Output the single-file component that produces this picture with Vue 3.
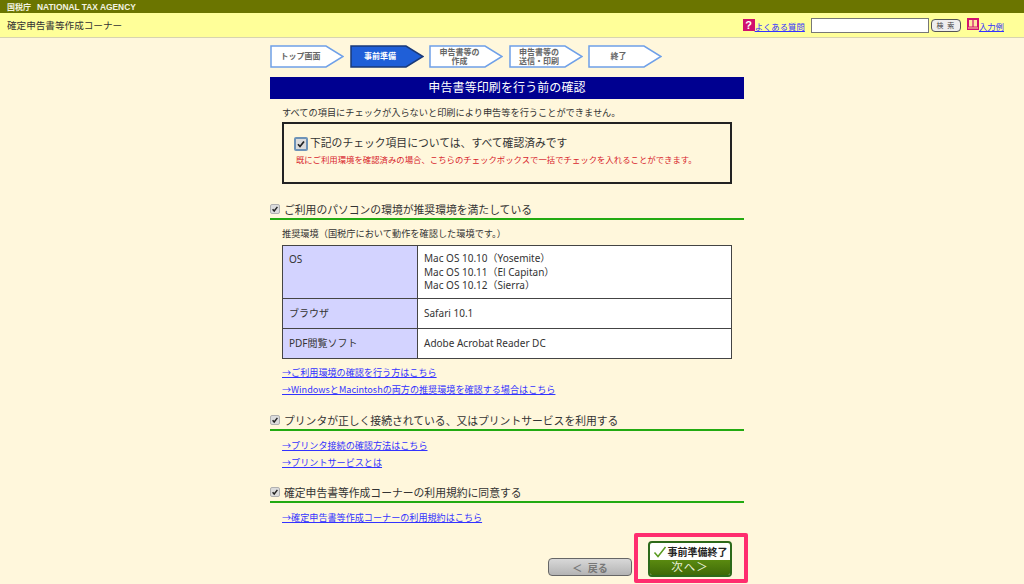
<template>
  <div class="page">
    <div class="agency">
      <span class="agency-jp">国税庁</span>
      <span class="agency-en">NATIONAL TAX AGENCY</span>
    </div>
    <header class="corner">
      <span class="corner-title">確定申告書等作成コーナー</span>
      <div class="tools">
        <span class="pink-icon">?</span>
        <a class="tool-link faq">よくある質問</a>
        <input class="search" type="text" />
        <button class="search-btn">検 索</button>
        <span class="pink-icon book">
          <svg viewBox="0 0 12 12" width="12" height="12">
            <path d="M2 2h3.4v6.5H2zM6.6 2H10v6.5H6.6z" fill="#ffe6a0" />
            <path d="M1 10h10" stroke="#ffe6a0" stroke-width="1" />
          </svg>
        </span>
        <a class="tool-link">入力例</a>
      </div>
    </header>

    <main class="content">
      <nav class="steps">
        <div v-for="step in steps" :key="step.label" class="step" :class="{ active: step.active }">
          <svg class="step-shape" viewBox="0 0 74 23" width="74" height="23">
            <polygon
              points="1,1 56,1 73,11.5 56,22 1,22"
              :fill="step.active ? '#1f5fd8' : '#fff'"
              :stroke="step.active ? '#1a3a78' : '#6fa0e8'"
              stroke-width="1.5"
            />
          </svg>
          <span class="step-label">{{ step.label }}</span>
        </div>
      </nav>

      <h1 class="page-title">申告書等印刷を行う前の確認</h1>
      <p class="intro">すべての項目にチェックが入らないと印刷により申告等を行うことができません。</p>

      <div class="check-all">
        <div class="check-all-row">
          <span class="checkbox focused">
            <svg viewBox="0 0 10 10" width="10" height="10"><path d="M2 5.2l2 2.3L8 2.4" fill="none" stroke="#222" stroke-width="1.7" /></svg>
          </span>
          <span class="check-all-label">下記のチェック項目については、すべて確認済みです</span>
        </div>
        <p class="check-all-note">既にご利用環境を確認済みの場合、こちらのチェックボックスで一括でチェックを入れることができます。</p>
      </div>

      <section class="item env">
        <h2 class="item-head">
          <span class="checkbox">
            <svg viewBox="0 0 10 10" width="8" height="8"><path d="M2 5.2l2 2.3L8 2.4" fill="none" stroke="#222" stroke-width="1.8" /></svg>
          </span>
          ご利用のパソコンの環境が推奨環境を満たしている
        </h2>
        <p class="env-note">推奨環境（国税庁において動作を確認した環境です。）</p>
        <table class="env-table">
          <tbody>
            <tr v-for="row in envRows" :key="row.name" :class="row.cls">
              <th>{{ row.name }}</th>
              <td>
                <div v-for="line in row.values" :key="line">{{ line }}</div>
              </td>
            </tr>
          </tbody>
        </table>
        <div class="links">
          <a>→ご利用環境の確認を行う方はこちら</a>
          <a>→WindowsとMacintoshの両方の推奨環境を確認する場合はこちら</a>
        </div>
      </section>

      <section class="item printer">
        <h2 class="item-head">
          <span class="checkbox">
            <svg viewBox="0 0 10 10" width="8" height="8"><path d="M2 5.2l2 2.3L8 2.4" fill="none" stroke="#222" stroke-width="1.8" /></svg>
          </span>
          プリンタが正しく接続されている、又はプリントサービスを利用する
        </h2>
        <div class="links">
          <a>→プリンタ接続の確認方法はこちら</a>
          <a>→プリントサービスとは</a>
        </div>
      </section>

      <section class="item terms">
        <h2 class="item-head">
          <span class="checkbox">
            <svg viewBox="0 0 10 10" width="8" height="8"><path d="M2 5.2l2 2.3L8 2.4" fill="none" stroke="#222" stroke-width="1.8" /></svg>
          </span>
          確定申告書等作成コーナーの利用規約に同意する
        </h2>
        <div class="links">
          <a>→確定申告書等作成コーナーの利用規約はこちら</a>
        </div>
      </section>

      <div class="actions">
        <button class="back-btn">＜&nbsp;&nbsp;戻る</button>
        <div class="highlight">
          <button class="next-btn">
            <span class="next-top">
              <svg viewBox="0 0 14 12" width="14" height="12"><path d="M1.5 6.5l3.5 4L12.5 1" fill="none" stroke="#5a9a20" stroke-width="1.5" /></svg>
              事前準備終了
            </span>
            <span class="next-bottom">次へ＞</span>
          </button>
        </div>
      </div>
    </main>
  </div>
</template>

<script setup>
const steps = [
  { label: 'トップ画面' },
  { label: '事前準備', active: true },
  { label: '申告書等の\n作成' },
  { label: '申告書等の\n送信・印刷' },
  { label: '終了' }
]

const envRows = [
  {
    name: 'OS',
    cls: 'row-os',
    values: ['Mac OS 10.10（Yosemite）', 'Mac OS 10.11（El Capitan）', 'Mac OS 10.12（Sierra）']
  },
  { name: 'ブラウザ', cls: 'row-browser', values: ['Safari 10.1'] },
  { name: 'PDF閲覧ソフト', cls: 'row-pdf', values: ['Adobe Acrobat Reader DC'] }
]
</script>

<style>
html,
body {
  margin: 0;
  background: #fff7dc;
}
</style>

<style scoped>
.page {
  width: 1024px;
  height: 584px;
  overflow: hidden;
  background: #fff7dc;
  color: #333;
  font-family: "Liberation Sans", "Noto Sans CJK JP", sans-serif;
}

.agency {
  height: 13px;
  background: #6b7500;
  color: #f4f4e0;
  display: flex;
  align-items: center;
  padding-left: 7px;
  font-size: 8px;
  font-weight: bold;
}

.agency-jp {
  margin-right: 6px;
}

.agency-en {
  font-size: 8.4px;
}

.corner {
  height: 24px;
  background: #ffff99;
  border-bottom: 1px solid #d8d4b0;
  display: flex;
  align-items: center;
  justify-content: space-between;
  padding: 0 20px 0 7px;
}

.corner-title {
  font-size: 9.6px;
  color: #333;
}

.tools {
  display: flex;
  align-items: center;
}

.pink-icon {
  width: 12px;
  height: 12px;
  background: #d0106f;
  color: #fff;
  font-size: 11px;
  font-weight: bold;
  line-height: 12px;
  text-align: center;
  display: block;
}

.book {
  margin-left: 6px;
  margin-bottom: 2px;
}

.book svg {
  display: block;
}

.tool-link {
  color: #3333ff;
  text-decoration: underline;
  font-size: 8.4px;
  margin-top: 2px;
}

.faq {
  margin-right: 6px;
}

.search {
  width: 118px;
  height: 15px;
  box-sizing: border-box;
  border: 1px solid #777;
  background: #fff;
  padding: 0;
  margin: 0;
}

.search-btn {
  width: 30px;
  height: 13px;
  margin: 0 0 0 2px;
  padding: 0;
  border: 1px solid #555;
  border-radius: 4px;
  background: #eeeeee;
  color: #444;
  font-size: 7px;
  line-height: 11px;
  font-family: inherit;
  letter-spacing: 1px;
}

.content {
  width: 474px;
  margin-left: 270px;
}

.steps {
  display: flex;
  gap: 5.5px;
  padding-top: 7px;
}

.step {
  position: relative;
  width: 74px;
  height: 23px;
}

.step-shape {
  position: absolute;
  left: 0;
  top: 0;
}

.step-label {
  position: absolute;
  left: 3px;
  top: 0;
  width: 55px;
  height: 23px;
  display: flex;
  align-items: center;
  justify-content: center;
  text-align: center;
  white-space: pre-line;
  font-size: 8px;
  line-height: 9px;
  font-weight: bold;
  color: #666;
}

.active .step-label {
  color: #fff;
}

.page-title {
  margin: 9px 0 0;
  height: 22px;
  background: #000090;
  color: #fff;
  font-size: 12px;
  font-weight: normal;
  line-height: 22px;
  text-align: center;
  letter-spacing: 0.1px;
}

.intro {
  margin: 7px 0 0 12px;
  font-size: 9.2px;
  line-height: 14px;
}

.check-all {
  margin: 2px 12px 0;
  height: 62px;
  box-sizing: border-box;
  border: 2px solid #222;
  padding: 12px 10px 0;
}

.check-all-row {
  display: flex;
  align-items: center;
  gap: 2px;
  height: 15px;
}

.check-all-label {
  font-size: 10.8px;
  line-height: 15px;
}

.check-all-note {
  margin: 3px 0 0 2px;
  font-size: 8.4px;
  line-height: 12px;
  color: #d81e2c;
}

.checkbox {
  width: 10px;
  height: 10px;
  background: #dcdcdc;
  border: 1px solid #b0b0b0;
  border-radius: 2px;
  box-sizing: border-box;
  display: inline-flex;
  align-items: center;
  justify-content: center;
  flex: none;
}

.checkbox.focused {
  width: 14px;
  height: 14px;
  border: 2px solid #6e93b8;
}

.item-head {
  margin: 0;
  display: flex;
  align-items: center;
  gap: 4px;
  height: 18px;
  border-bottom: 2px solid #22aa11;
  font-size: 10.8px;
  font-weight: normal;
  color: #333;
}

.env {
  margin-top: 16px;
}

.env-note {
  margin: 7px 0 0 12px;
  font-size: 9.2px;
  line-height: 14px;
}

.env-table {
  margin: 4px 12px 0;
  width: 450px;
  border-collapse: collapse;
  background: #fff;
  font-size: 10px;
  font-family: "Noto Sans", "Noto Sans CJK JP", sans-serif;
}

.env-table th,
.env-table td {
  border: 1px solid #444;
  vertical-align: top;
  padding: 0;
}

.env-table th {
  width: 135px;
  background: #d3d3ff;
  text-align: left;
  font-weight: normal;
  padding-left: 6px;
  padding-top: 6px;
  box-sizing: border-box;
}

.env-table td {
  padding: 6px 6px 0;
  line-height: 13.5px;
}

.row-os th,
.row-os td {
  height: 53px;
  box-sizing: border-box;
}

.row-browser th,
.row-browser td,
.row-pdf th,
.row-pdf td {
  height: 30px;
  box-sizing: border-box;
}

.row-browser td,
.row-pdf td {
  padding-top: 8px;
}

.links {
  display: flex;
  flex-direction: column;
  align-items: flex-start;
  gap: 5px;
  margin: 7px 0 0 12px;
}

.links a {
  color: #3333ff;
  text-decoration: underline;
  font-family: "Noto Sans CJK JP", sans-serif;
  font-size: 9.1px;
  line-height: 12px;
}

.printer {
  margin-top: 16px;
}

.printer .links {
  margin-top: 8px;
}

.terms {
  margin-top: 15px;
}

.terms .links {
  margin-top: 8px;
}

.actions {
  display: flex;
  justify-content: flex-end;
  align-items: flex-end;
  margin: 10px -4px 0 0;
}

.back-btn {
  width: 84px;
  height: 18px;
  padding: 0;
  margin: 0 2px 7px 0;
  border: 1px solid #666;
  border-radius: 4px;
  background: linear-gradient(#d8d8d8, #b4b4b4);
  color: #777;
  font-size: 10px;
  font-weight: bold;
  font-family: inherit;
}

.highlight {
  width: 114px;
  height: 50px;
  box-sizing: border-box;
  border: 4px solid #ff2d6f;
  border-radius: 2px;
  padding: 4px 0 0 10px;
}

.next-btn {
  width: 84px;
  height: 36px;
  padding: 0;
  border: 2px solid #2d6a1a;
  border-radius: 4px;
  background: #fff;
  overflow: hidden;
  display: flex;
  flex-direction: column;
  font-family: inherit;
}

.next-top {
  height: 17px;
  width: 100%;
  display: flex;
  align-items: center;
  justify-content: center;
  gap: 1px;
  font-size: 10px;
  font-weight: bold;
  color: #222;
}

.next-bottom {
  flex: 1;
  width: 100%;
  background: linear-gradient(#5a8a10, #3f6a08);
  color: #e8f0d8;
  font-size: 11.5px;
  line-height: 15px;
  text-align: center;
  letter-spacing: 1px;
}
</style>
